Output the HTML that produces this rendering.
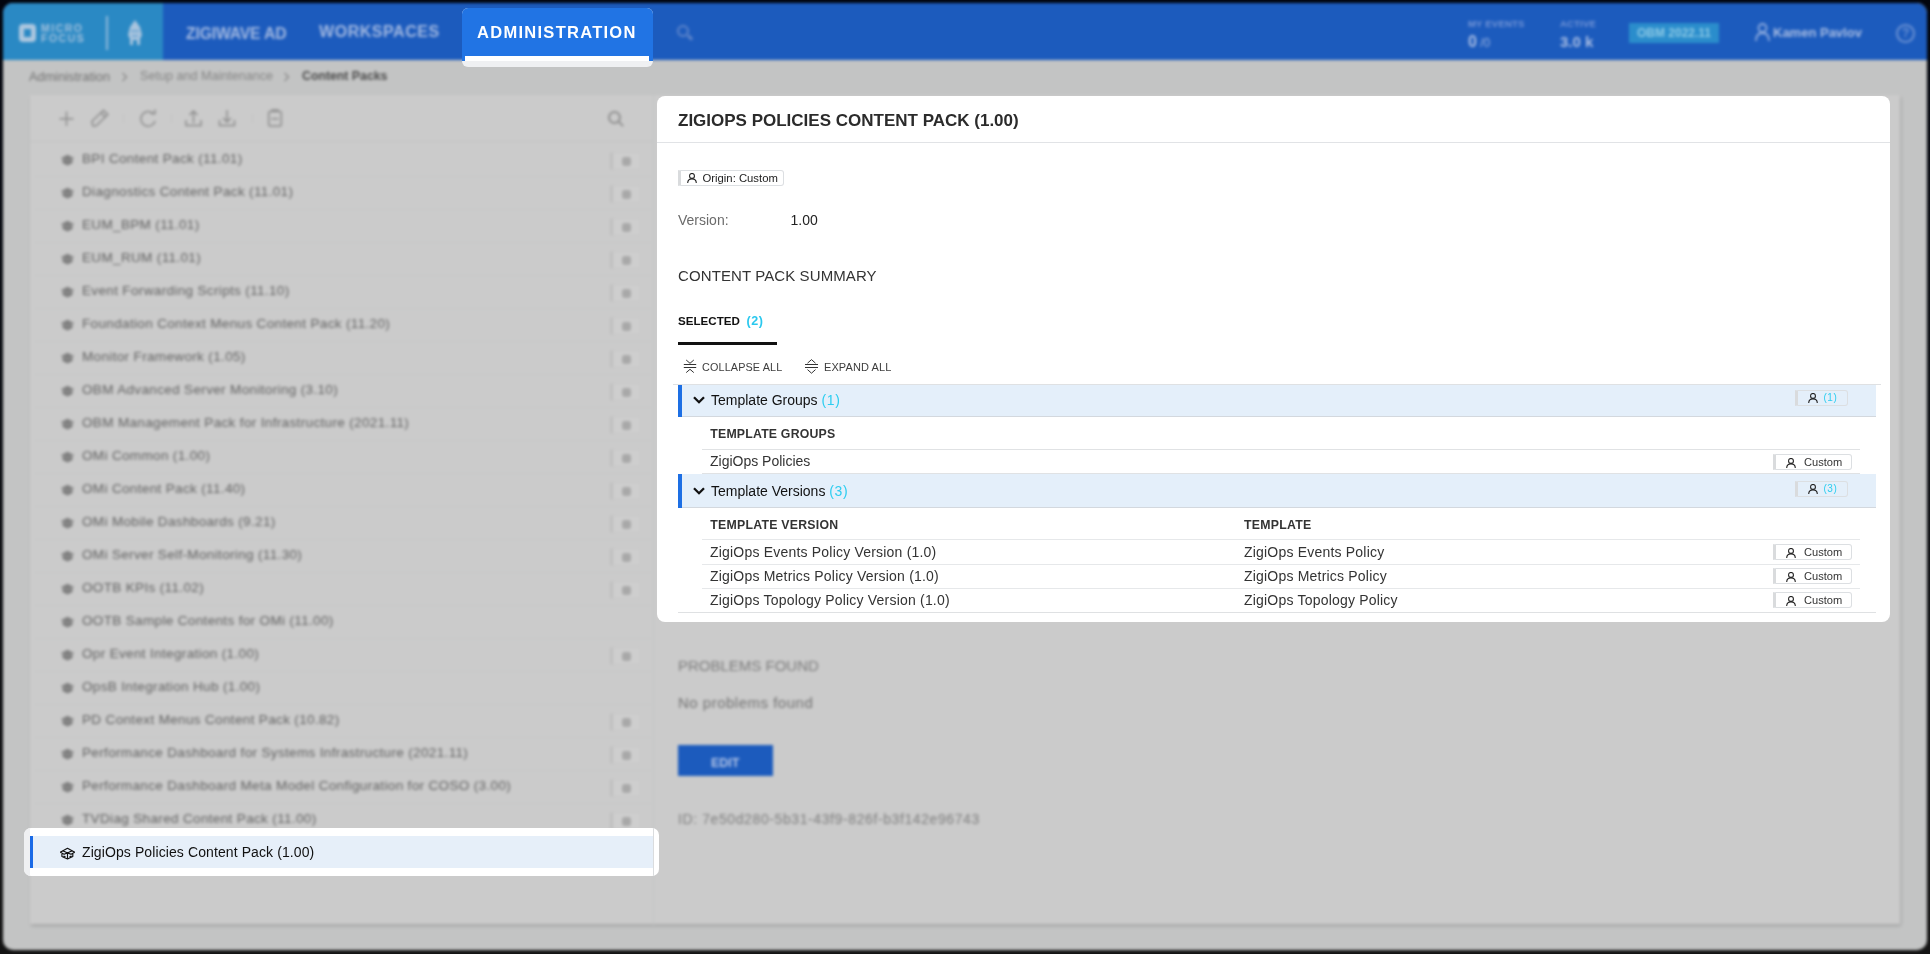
<!DOCTYPE html>
<html><head><meta charset="utf-8">
<style>
*{box-sizing:border-box;margin:0;padding:0}
html,body{width:1930px;height:954px;overflow:hidden;background:linear-gradient(#02050e,#0a0d12 40%,#141414);font-family:"Liberation Sans",sans-serif}
#bg{position:absolute;left:0;top:0;width:1930px;height:954px;filter:blur(1.4px);overflow:hidden}
.a{position:absolute;white-space:nowrap}
#win{position:absolute;left:3px;top:3px;width:1924px;height:947px;border-radius:10px;overflow:hidden;background:#c3c4c4}
.navt{position:absolute;color:#a3b9e1;font-weight:bold;font-size:16px;letter-spacing:1.5px;top:22px;white-space:nowrap}
.rt{font-size:13.5px;line-height:1;color:#626262;letter-spacing:0.35px}
.ric{width:14px;height:11px;border-radius:5px 5px 6px 6px;background:#8c8c8c}
.rbd{width:31px;height:18px;border:1px solid #c7c7c7;border-left:3px solid #bfbfbf;background:#cecece;border-radius:0 2px 2px 0}
.rbd:after{content:"";position:absolute;left:9px;top:4px;width:9px;height:9px;background:#a8a8a8;border-radius:3px}
#card{position:absolute;left:657px;top:96px;width:1233px;height:526px;background:#fff;border-radius:8px;overflow:hidden;will-change:transform}
#card .a{line-height:1}
</style></head><body>
<div id="bg">
 <div id="win"></div>
 <div class="a" style="left:3px;top:3px;width:1924px;height:57px;background:#1c5bbd;border-radius:10px 10px 0 0"></div>
 <div class="a" style="left:3px;top:3px;width:160px;height:57px;background:#2a89c4;border-radius:10px 0 0 0"></div>
 <div class="a" style="left:19px;top:24px;width:17px;height:18px;border:5px solid #adc7df;border-radius:4px"></div>
 <div class="a" style="left:41px;top:23px;font-size:10.5px;font-weight:bold;color:#a3c1dd;line-height:10px;letter-spacing:1.5px">MICRO<br>FOCUS</div>
 <div class="a" style="left:106px;top:16px;width:2px;height:34px;background:#8fb8da"></div>
 <svg class="a" style="left:126px;top:19px" width="18" height="27" viewBox="0 0 18 27"><path d="M9 1 L4 8 L2 16 L4 20 V26 H7 V21 H11 V26 H14 V20 L16 16 L14 8 Z" fill="#a9c4de"/><path d="M5 12 H13 M6 17 H12" stroke="#5e9fd0" stroke-width="1.5"/></svg>
 <div class="navt" style="left:186px;top:24.5px;font-size:15.8px;letter-spacing:-0.2px">ZIGIWAVE AD</div>
 <div class="navt" style="left:319px;top:23px;font-size:16px;letter-spacing:0.55px">WORKSPACES</div>
 <div class="a" style="left:677px;top:25px;width:12px;height:12px;border:2.5px solid #5f86cb;border-radius:50%"></div>
 <div class="a" style="left:687px;top:36px;width:6px;height:3px;background:#5f86cb;transform:rotate(45deg)"></div>
 <div class="a" style="left:1468px;top:18px;font-size:9.5px;font-weight:bold;color:#7697d8;letter-spacing:0.2px">MY EVENTS</div>
 <div class="a" style="left:1468px;top:33px;font-size:16px;font-weight:bold;color:#a9bde3">0<span style="font-size:12px;font-weight:normal;color:#9ab3e1"> /0</span></div>
 <div class="a" style="left:1560px;top:18px;font-size:9.5px;font-weight:bold;color:#7697d8;letter-spacing:0.2px">ACTIVE</div>
 <div class="a" style="left:1560px;top:33px;font-size:15px;font-weight:bold;color:#a9bde3">3.0 k</div>
 <div class="a" style="left:1629px;top:23px;width:90px;height:20px;background:#2a8dcc"></div>
 <div class="a" style="left:1637px;top:26px;font-size:12px;font-weight:bold;color:#8fcbe6">OBM 2022.11</div>
 <div class="a" style="left:1755px;top:23px;width:15px;height:18px"><svg width="15" height="18" viewBox="0 0 15 18"><circle cx="7.5" cy="5" r="4" fill="none" stroke="#8eacdf" stroke-width="1.8"/><path d="M1 18 C1 12 4 10 7.5 10 C11 10 14 12 14 18" fill="none" stroke="#8eacdf" stroke-width="1.8"/></svg></div>
 <div class="a" style="left:1773px;top:25px;font-size:13px;font-weight:bold;color:#a9bde3">Kamen Pavlov</div>
 <div class="a" style="left:1896px;top:24px;width:19px;height:19px;border:2px solid #6c92d3;border-radius:50%"></div><div class="a" style="left:1902px;top:26px;font-size:12px;font-weight:bold;color:#6c92d3">?</div>
 <div class="a" style="left:29px;top:69px;font-size:12.8px;color:#727272">Administration</div>
 <svg class="a" style="left:121px;top:72px" width="7" height="10" viewBox="0 0 7 10"><path d="M1.5 1 L5.5 5 L1.5 9" fill="none" stroke="#8a8a8a" stroke-width="1.3"/></svg>
 <div class="a" style="left:140px;top:69px;font-size:12.6px;color:#858585">Setup and Maintenance</div>
 <svg class="a" style="left:283px;top:72px" width="7" height="10" viewBox="0 0 7 10"><path d="M1.5 1 L5.5 5 L1.5 9" fill="none" stroke="#8a8a8a" stroke-width="1.3"/></svg>
 <div class="a" style="left:302px;top:69px;font-size:12.3px;font-weight:bold;color:#4a4a4a">Content Packs</div>
 <div class="a" style="left:30px;top:95px;width:1870px;height:829px;background:#cbcbcb;box-shadow:1px 2px 3px rgba(0,0,0,0.16)"></div>
 <div class="a" style="left:30px;top:141px;width:624px;height:1px;background:#c3c4c4"></div>
 <svg class="a" style="left:50px;top:100px" width="240" height="35" viewBox="50 100 240 35"><g fill="none" stroke="#8c8c8c" stroke-width="1.5">
 <path d="M66.5 111.5V126M59.5 118.7H73.5"/>
 <path d="M93 126 L91.8 121.5 L103.5 110.3 L107.8 114.6 L96.2 125.8 Z M101 112.8 L105.3 117.1"/>
 <path d="M153.8 114.2 A7.3 7.3 0 1 0 155.2 121" /><path d="M150.5 113.6 L155 113.6 L155 109.6" />
 <path d="M186 120V125.6H201V120M193.5 123V111M189.5 115 L193.5 111 L197.5 115"/>
 <path d="M219.5 120V125.6H234.5V120M227 110V122M223 118 L227 122 L231 118"/>
 <rect x="268.7" y="111.5" width="12.6" height="14.6" rx="1.5"/><path d="M272 111.5V110H278V111.5M271.5 118.7H278.5"/>
 </g><g stroke="#c3c3c3" stroke-width="1"><path d="M123.5 114V123.5M171.5 114V123.5M252.5 114V123.5"/></g></svg>
 <div class="a" style="left:608px;top:111px;width:13px;height:13px;border:2px solid #8f8f8f;border-radius:50%"></div>
 <div class="a" style="left:618px;top:123px;width:6px;height:2px;background:#8f8f8f;transform:rotate(45deg)"></div>
<div class="a" style="left:34px;top:176px;width:618px;height:1px;background:#c6c7c7"></div>
<svg class="a" style="left:60px;top:154px" width="15" height="12" viewBox="0 0 15 12"><path d="M1 4 L7.5 0.8 L14 4 L12.5 5 V9 L7.5 11.5 L2.5 9 V5 Z" fill="#7e7e7e"/><path d="M1 4 L7.5 7 L14 4" stroke="#9a9a9a" stroke-width="0.8" fill="none"/></svg>
<div class="a rt" style="left:82px;top:152px">BPI Content Pack (11.01)</div>
<div class="a rbd" style="left:610px;top:152px"></div>
<div class="a" style="left:34px;top:209px;width:618px;height:1px;background:#c6c7c7"></div>
<svg class="a" style="left:60px;top:187px" width="15" height="12" viewBox="0 0 15 12"><path d="M1 4 L7.5 0.8 L14 4 L12.5 5 V9 L7.5 11.5 L2.5 9 V5 Z" fill="#7e7e7e"/><path d="M1 4 L7.5 7 L14 4" stroke="#9a9a9a" stroke-width="0.8" fill="none"/></svg>
<div class="a rt" style="left:82px;top:185px">Diagnostics Content Pack (11.01)</div>
<div class="a rbd" style="left:610px;top:185px"></div>
<div class="a" style="left:34px;top:242px;width:618px;height:1px;background:#c6c7c7"></div>
<svg class="a" style="left:60px;top:220px" width="15" height="12" viewBox="0 0 15 12"><path d="M1 4 L7.5 0.8 L14 4 L12.5 5 V9 L7.5 11.5 L2.5 9 V5 Z" fill="#7e7e7e"/><path d="M1 4 L7.5 7 L14 4" stroke="#9a9a9a" stroke-width="0.8" fill="none"/></svg>
<div class="a rt" style="left:82px;top:218px">EUM_BPM (11.01)</div>
<div class="a rbd" style="left:610px;top:218px"></div>
<div class="a" style="left:34px;top:275px;width:618px;height:1px;background:#c6c7c7"></div>
<svg class="a" style="left:60px;top:253px" width="15" height="12" viewBox="0 0 15 12"><path d="M1 4 L7.5 0.8 L14 4 L12.5 5 V9 L7.5 11.5 L2.5 9 V5 Z" fill="#7e7e7e"/><path d="M1 4 L7.5 7 L14 4" stroke="#9a9a9a" stroke-width="0.8" fill="none"/></svg>
<div class="a rt" style="left:82px;top:251px">EUM_RUM (11.01)</div>
<div class="a rbd" style="left:610px;top:251px"></div>
<div class="a" style="left:34px;top:308px;width:618px;height:1px;background:#c6c7c7"></div>
<svg class="a" style="left:60px;top:286px" width="15" height="12" viewBox="0 0 15 12"><path d="M1 4 L7.5 0.8 L14 4 L12.5 5 V9 L7.5 11.5 L2.5 9 V5 Z" fill="#7e7e7e"/><path d="M1 4 L7.5 7 L14 4" stroke="#9a9a9a" stroke-width="0.8" fill="none"/></svg>
<div class="a rt" style="left:82px;top:284px">Event Forwarding Scripts (11.10)</div>
<div class="a rbd" style="left:610px;top:284px"></div>
<div class="a" style="left:34px;top:341px;width:618px;height:1px;background:#c6c7c7"></div>
<svg class="a" style="left:60px;top:319px" width="15" height="12" viewBox="0 0 15 12"><path d="M1 4 L7.5 0.8 L14 4 L12.5 5 V9 L7.5 11.5 L2.5 9 V5 Z" fill="#7e7e7e"/><path d="M1 4 L7.5 7 L14 4" stroke="#9a9a9a" stroke-width="0.8" fill="none"/></svg>
<div class="a rt" style="left:82px;top:317px">Foundation Context Menus Content Pack (11.20)</div>
<div class="a rbd" style="left:610px;top:317px"></div>
<div class="a" style="left:34px;top:374px;width:618px;height:1px;background:#c6c7c7"></div>
<svg class="a" style="left:60px;top:352px" width="15" height="12" viewBox="0 0 15 12"><path d="M1 4 L7.5 0.8 L14 4 L12.5 5 V9 L7.5 11.5 L2.5 9 V5 Z" fill="#7e7e7e"/><path d="M1 4 L7.5 7 L14 4" stroke="#9a9a9a" stroke-width="0.8" fill="none"/></svg>
<div class="a rt" style="left:82px;top:350px">Monitor Framework (1.05)</div>
<div class="a rbd" style="left:610px;top:350px"></div>
<div class="a" style="left:34px;top:407px;width:618px;height:1px;background:#c6c7c7"></div>
<svg class="a" style="left:60px;top:385px" width="15" height="12" viewBox="0 0 15 12"><path d="M1 4 L7.5 0.8 L14 4 L12.5 5 V9 L7.5 11.5 L2.5 9 V5 Z" fill="#7e7e7e"/><path d="M1 4 L7.5 7 L14 4" stroke="#9a9a9a" stroke-width="0.8" fill="none"/></svg>
<div class="a rt" style="left:82px;top:383px">OBM Advanced Server Monitoring (3.10)</div>
<div class="a rbd" style="left:610px;top:383px"></div>
<div class="a" style="left:34px;top:440px;width:618px;height:1px;background:#c6c7c7"></div>
<svg class="a" style="left:60px;top:418px" width="15" height="12" viewBox="0 0 15 12"><path d="M1 4 L7.5 0.8 L14 4 L12.5 5 V9 L7.5 11.5 L2.5 9 V5 Z" fill="#7e7e7e"/><path d="M1 4 L7.5 7 L14 4" stroke="#9a9a9a" stroke-width="0.8" fill="none"/></svg>
<div class="a rt" style="left:82px;top:416px">OBM Management Pack for Infrastructure (2021.11)</div>
<div class="a rbd" style="left:610px;top:416px"></div>
<div class="a" style="left:34px;top:473px;width:618px;height:1px;background:#c6c7c7"></div>
<svg class="a" style="left:60px;top:451px" width="15" height="12" viewBox="0 0 15 12"><path d="M1 4 L7.5 0.8 L14 4 L12.5 5 V9 L7.5 11.5 L2.5 9 V5 Z" fill="#7e7e7e"/><path d="M1 4 L7.5 7 L14 4" stroke="#9a9a9a" stroke-width="0.8" fill="none"/></svg>
<div class="a rt" style="left:82px;top:449px">OMi Common (1.00)</div>
<div class="a rbd" style="left:610px;top:449px"></div>
<div class="a" style="left:34px;top:506px;width:618px;height:1px;background:#c6c7c7"></div>
<svg class="a" style="left:60px;top:484px" width="15" height="12" viewBox="0 0 15 12"><path d="M1 4 L7.5 0.8 L14 4 L12.5 5 V9 L7.5 11.5 L2.5 9 V5 Z" fill="#7e7e7e"/><path d="M1 4 L7.5 7 L14 4" stroke="#9a9a9a" stroke-width="0.8" fill="none"/></svg>
<div class="a rt" style="left:82px;top:482px">OMi Content Pack (11.40)</div>
<div class="a rbd" style="left:610px;top:482px"></div>
<div class="a" style="left:34px;top:539px;width:618px;height:1px;background:#c6c7c7"></div>
<svg class="a" style="left:60px;top:517px" width="15" height="12" viewBox="0 0 15 12"><path d="M1 4 L7.5 0.8 L14 4 L12.5 5 V9 L7.5 11.5 L2.5 9 V5 Z" fill="#7e7e7e"/><path d="M1 4 L7.5 7 L14 4" stroke="#9a9a9a" stroke-width="0.8" fill="none"/></svg>
<div class="a rt" style="left:82px;top:515px">OMi Mobile Dashboards (9.21)</div>
<div class="a rbd" style="left:610px;top:515px"></div>
<div class="a" style="left:34px;top:572px;width:618px;height:1px;background:#c6c7c7"></div>
<svg class="a" style="left:60px;top:550px" width="15" height="12" viewBox="0 0 15 12"><path d="M1 4 L7.5 0.8 L14 4 L12.5 5 V9 L7.5 11.5 L2.5 9 V5 Z" fill="#7e7e7e"/><path d="M1 4 L7.5 7 L14 4" stroke="#9a9a9a" stroke-width="0.8" fill="none"/></svg>
<div class="a rt" style="left:82px;top:548px">OMi Server Self-Monitoring (11.30)</div>
<div class="a rbd" style="left:610px;top:548px"></div>
<div class="a" style="left:34px;top:605px;width:618px;height:1px;background:#c6c7c7"></div>
<svg class="a" style="left:60px;top:583px" width="15" height="12" viewBox="0 0 15 12"><path d="M1 4 L7.5 0.8 L14 4 L12.5 5 V9 L7.5 11.5 L2.5 9 V5 Z" fill="#7e7e7e"/><path d="M1 4 L7.5 7 L14 4" stroke="#9a9a9a" stroke-width="0.8" fill="none"/></svg>
<div class="a rt" style="left:82px;top:581px">OOTB KPIs (11.02)</div>
<div class="a rbd" style="left:610px;top:581px"></div>
<div class="a" style="left:34px;top:638px;width:618px;height:1px;background:#c6c7c7"></div>
<svg class="a" style="left:60px;top:616px" width="15" height="12" viewBox="0 0 15 12"><path d="M1 4 L7.5 0.8 L14 4 L12.5 5 V9 L7.5 11.5 L2.5 9 V5 Z" fill="#7e7e7e"/><path d="M1 4 L7.5 7 L14 4" stroke="#9a9a9a" stroke-width="0.8" fill="none"/></svg>
<div class="a rt" style="left:82px;top:614px">OOTB Sample Contents for OMi (11.00)</div>
<div class="a" style="left:34px;top:671px;width:618px;height:1px;background:#c6c7c7"></div>
<svg class="a" style="left:60px;top:649px" width="15" height="12" viewBox="0 0 15 12"><path d="M1 4 L7.5 0.8 L14 4 L12.5 5 V9 L7.5 11.5 L2.5 9 V5 Z" fill="#7e7e7e"/><path d="M1 4 L7.5 7 L14 4" stroke="#9a9a9a" stroke-width="0.8" fill="none"/></svg>
<div class="a rt" style="left:82px;top:647px">Opr Event Integration (1.00)</div>
<div class="a rbd" style="left:610px;top:647px"></div>
<div class="a" style="left:34px;top:704px;width:618px;height:1px;background:#c6c7c7"></div>
<svg class="a" style="left:60px;top:682px" width="15" height="12" viewBox="0 0 15 12"><path d="M1 4 L7.5 0.8 L14 4 L12.5 5 V9 L7.5 11.5 L2.5 9 V5 Z" fill="#7e7e7e"/><path d="M1 4 L7.5 7 L14 4" stroke="#9a9a9a" stroke-width="0.8" fill="none"/></svg>
<div class="a rt" style="left:82px;top:680px">OpsB Integration Hub (1.00)</div>
<div class="a" style="left:34px;top:737px;width:618px;height:1px;background:#c6c7c7"></div>
<svg class="a" style="left:60px;top:715px" width="15" height="12" viewBox="0 0 15 12"><path d="M1 4 L7.5 0.8 L14 4 L12.5 5 V9 L7.5 11.5 L2.5 9 V5 Z" fill="#7e7e7e"/><path d="M1 4 L7.5 7 L14 4" stroke="#9a9a9a" stroke-width="0.8" fill="none"/></svg>
<div class="a rt" style="left:82px;top:713px">PD Context Menus Content Pack (10.82)</div>
<div class="a rbd" style="left:610px;top:713px"></div>
<div class="a" style="left:34px;top:770px;width:618px;height:1px;background:#c6c7c7"></div>
<svg class="a" style="left:60px;top:748px" width="15" height="12" viewBox="0 0 15 12"><path d="M1 4 L7.5 0.8 L14 4 L12.5 5 V9 L7.5 11.5 L2.5 9 V5 Z" fill="#7e7e7e"/><path d="M1 4 L7.5 7 L14 4" stroke="#9a9a9a" stroke-width="0.8" fill="none"/></svg>
<div class="a rt" style="left:82px;top:746px">Performance Dashboard for Systems Infrastructure (2021.11)</div>
<div class="a rbd" style="left:610px;top:746px"></div>
<div class="a" style="left:34px;top:803px;width:618px;height:1px;background:#c6c7c7"></div>
<svg class="a" style="left:60px;top:781px" width="15" height="12" viewBox="0 0 15 12"><path d="M1 4 L7.5 0.8 L14 4 L12.5 5 V9 L7.5 11.5 L2.5 9 V5 Z" fill="#7e7e7e"/><path d="M1 4 L7.5 7 L14 4" stroke="#9a9a9a" stroke-width="0.8" fill="none"/></svg>
<div class="a rt" style="left:82px;top:779px">Performance Dashboard Meta Model Configuration for COSO (3.00)</div>
<div class="a rbd" style="left:610px;top:779px"></div>
<div class="a" style="left:34px;top:836px;width:618px;height:1px;background:#c6c7c7"></div>
<svg class="a" style="left:60px;top:814px" width="15" height="12" viewBox="0 0 15 12"><path d="M1 4 L7.5 0.8 L14 4 L12.5 5 V9 L7.5 11.5 L2.5 9 V5 Z" fill="#7e7e7e"/><path d="M1 4 L7.5 7 L14 4" stroke="#9a9a9a" stroke-width="0.8" fill="none"/></svg>
<div class="a rt" style="left:82px;top:812px">TVDiag Shared Content Pack (11.00)</div>
<div class="a rbd" style="left:610px;top:812px"></div>
<div class="a" style="left:34px;top:869px;width:618px;height:1px;background:#c6c7c7"></div>
<svg class="a" style="left:60px;top:847px" width="15" height="12" viewBox="0 0 15 12"><path d="M1 4 L7.5 0.8 L14 4 L12.5 5 V9 L7.5 11.5 L2.5 9 V5 Z" fill="#7e7e7e"/><path d="M1 4 L7.5 7 L14 4" stroke="#9a9a9a" stroke-width="0.8" fill="none"/></svg>
<div class="a rt" style="left:82px;top:845px">ZigiOps Policies Content Pack (1.00)</div>
 <div class="a" style="left:653px;top:95px;width:1px;height:830px;background:#c4c5c5"></div>
 <div class="a" style="left:678px;top:658px;font-size:15px;line-height:1;color:#7c7c7c;letter-spacing:0px">PROBLEMS FOUND</div>
 <div class="a" style="left:678px;top:695px;font-size:15px;line-height:1;color:#727272;letter-spacing:0.5px">No problems found</div>
 <div class="a" style="left:678px;top:745px;width:95px;height:31px;background:#1c5bbd"></div>
 <div class="a" style="left:711px;top:756.5px;font-size:12.5px;line-height:1;font-weight:bold;color:#b3c4e6">EDIT</div>
 <div class="a" style="left:678px;top:812px;font-size:14px;line-height:1;color:#7e7e7e;letter-spacing:0.6px">ID: 7e50d280-5b31-43f9-826f-b3f142e96743</div>
</div>
<!-- highlighted tab -->
<div class="a" style="left:462px;top:8px;width:191px;height:59px;border-radius:6px;overflow:hidden;background:#eff0f2;will-change:transform">
 <div class="a" style="left:0;top:0;width:191px;height:53px;background:#2174e4"></div>
 <div class="a" style="left:3px;top:48px;width:184px;height:5px;background:#fff"></div>
 <div class="a" style="left:15px;top:15.5px;font-size:16.5px;line-height:1;font-weight:bold;color:#fff;letter-spacing:1.28px">ADMINISTRATION</div>
</div>
<!-- selected item -->
<div class="a" style="left:24px;top:828px;width:635px;height:48px;border-radius:7px;overflow:hidden;background:#fff;will-change:transform">
 <div class="a" style="left:0;top:0;width:6px;height:48px;background:#eff0f2"></div>
 <div class="a" style="left:6px;top:8px;width:623px;height:32px;background:#e6eff9"></div>
 <div class="a" style="left:6px;top:8px;width:3px;height:32px;background:#1a6ae6"></div>
 <div class="a" style="left:629px;top:0;width:1px;height:48px;background:#dadcde"></div>
 <svg class="a" style="left:35px;top:18px" width="18" height="15" viewBox="0 0 18 15"><path d="M1.2 6.3 L8.5 2.3 L15.8 6.3 M3.4 4.5 L8.5 6.9 L13.4 4.5 M1.2 6.3 L5.1 8.3 L8.5 6.9 L12 8.3 L15.8 6.3 M2.9 8 V10.5 L8.5 13 L13.8 10.5 V8 M8.5 6.9 V13 M4.5 10 L6.5 10.8 M10.5 10.8 L12.5 10" fill="none" stroke="#111" stroke-width="1.15" stroke-linejoin="round"/></svg>
 <div class="a" style="left:58px;top:17px;font-size:14px;line-height:1;color:#111;letter-spacing:0.1px">ZigiOps Policies Content Pack (1.00)</div>
</div>
<div id="card">
<div class="a" style="left:21.0px;top:16.0px;font-size:17px;line-height:1;font-weight:bold;color:#2b2b2b">ZIGIOPS POLICIES CONTENT PACK (1.00)</div>
<div class="a" style="left:0px;top:46px;width:1233px;height:1px;background:#e1e3e6"></div>
<div class="a" style="left:21px;top:74px;width:106px;height:16px;background:#fff;border:1px solid #dcdfe2;border-left:3px solid #d9dbdd;border-radius:0 3px 3px 0"></div>
<svg class="a" style="left:30px;top:76.5px" width="10" height="10" viewBox="0 0 10 10"><circle cx="5" cy="2.9" r="2.45" fill="none" stroke="#222" stroke-width="1.1"/><path d="M0.7 9.9 C0.8 7 2.7 5.9 5 5.9 C7.3 5.9 9.2 7 9.3 9.9" fill="none" stroke="#222" stroke-width="1.1"/></svg>
<div class="a" style="left:45.5px;top:76.9px;font-size:11.3px;line-height:1;color:#222">Origin: Custom</div>
<div class="a" style="left:21.0px;top:117.3px;font-size:14px;line-height:1;color:#6b6b6b">Version:</div>
<div class="a" style="left:133.5px;top:117.3px;font-size:14px;line-height:1;color:#222">1.00</div>
<div class="a" style="left:21.0px;top:171.8px;font-size:15px;line-height:1;color:#333;letter-spacing:0.1px">CONTENT PACK SUMMARY</div>
<div class="a" style="left:21.0px;top:219.1px;font-size:11.6px;line-height:1;font-weight:bold;color:#111">SELECTED</div>
<div class="a" style="left:89.5px;top:218.9px;font-size:12.5px;line-height:1;font-weight:bold;color:#2ac8ee;letter-spacing:0.6px">(2)</div>
<div class="a" style="left:21px;top:246px;width:99px;height:3px;background:#111"></div>
<svg class="a" style="left:26px;top:263px" width="14" height="16" viewBox="0 0 14 16"><path d="M0.8 5.5H13.2M0.8 8.5H13.2" stroke="#333" stroke-width="1"/><path d="M3.2 1 L7 4.3 L10.8 1M3.2 13.6 L7 10.3 L10.8 13.6" fill="none" stroke="#333" stroke-width="1"/></svg>
<div class="a" style="left:45.0px;top:265.7px;font-size:10.8px;line-height:1;color:#3d3d3d;letter-spacing:0.15px">COLLAPSE ALL</div>
<svg class="a" style="left:147px;top:262px" width="15" height="17" viewBox="0 0 15 17"><path d="M1 6.5H14M1 9.5H14" stroke="#333" stroke-width="1"/><path d="M3.5 5.2 L7.5 1.6 L11.5 5.2M3.5 11.6 L7.5 15.2 L11.5 11.6" fill="none" stroke="#333" stroke-width="1"/></svg>
<div class="a" style="left:167.0px;top:265.5px;font-size:11px;line-height:1;color:#3d3d3d;letter-spacing:0.1px">EXPAND ALL</div>
<div class="a" style="left:16px;top:288px;width:1208px;height:1px;background:#dfe1e3"></div>
<div class="a" style="left:21px;top:289px;width:1198px;height:32px;background:#e4effa;border-bottom:1px solid #d3d8de"></div>
<div class="a" style="left:21px;top:289px;width:4px;height:32px;background:#1d6fe4"></div>
<svg class="a" style="left:35px;top:299.2px" width="14" height="10" viewBox="0 0 14 10"><path d="M2 2.2 L7 7.2 L12 2.2" fill="none" stroke="#111" stroke-width="2.3"/></svg>
<div class="a" style="left:54.0px;top:296.8px;font-size:14px;line-height:1;color:#111">Template Groups <span style="color:#2ccdf0;letter-spacing:0.6px">(1)</span></div>
<div class="a" style="left:1138px;top:294px;width:53px;height:16px;background:#e4effa;border:1px solid #dcdfe2;border-left:3px solid #d9dbdd;border-radius:0 3px 3px 0"></div>
<svg class="a" style="left:1151px;top:297px" width="10" height="10" viewBox="0 0 10 10"><circle cx="5" cy="2.9" r="2.45" fill="none" stroke="#222" stroke-width="1.1"/><path d="M0.7 9.9 C0.8 7 2.7 5.9 5 5.9 C7.3 5.9 9.2 7 9.3 9.9" fill="none" stroke="#222" stroke-width="1.1"/></svg>
<div class="a" style="left:1166.5px;top:297.4px;font-size:10px;line-height:1;color:#2ccdf0;letter-spacing:0.5px">(1)</div>
<div class="a" style="left:53.3px;top:331.6px;font-size:12.3px;line-height:1;font-weight:bold;color:#333;letter-spacing:0.2px">TEMPLATE GROUPS</div>
<div class="a" style="left:45px;top:353px;width:1158px;height:1px;background:#e0e2e4"></div>
<div class="a" style="left:53.0px;top:358.1px;font-size:14px;line-height:1;color:#333">ZigiOps Policies</div>
<div class="a" style="left:1116px;top:358px;width:79px;height:16px;background:#fff;border:1px solid #dcdfe2;border-left:3px solid #d9dbdd;border-radius:0 3px 3px 0"></div>
<svg class="a" style="left:1129px;top:361.5px" width="10" height="10" viewBox="0 0 10 10"><circle cx="5" cy="2.9" r="2.45" fill="none" stroke="#222" stroke-width="1.1"/><path d="M0.7 9.9 C0.8 7 2.7 5.9 5 5.9 C7.3 5.9 9.2 7 9.3 9.9" fill="none" stroke="#222" stroke-width="1.1"/></svg>
<div class="a" style="left:1147.0px;top:360.8px;font-size:11.1px;line-height:1;color:#333">Custom</div>
<div class="a" style="left:45px;top:377px;width:1158px;height:1px;background:#e0e2e4"></div>
<div class="a" style="left:21px;top:378px;width:1198px;height:34px;background:#e4effa;border-bottom:1px solid #d3d8de"></div>
<div class="a" style="left:21px;top:378px;width:4px;height:34px;background:#1d6fe4"></div>
<svg class="a" style="left:35px;top:390.1px" width="14" height="10" viewBox="0 0 14 10"><path d="M2 2.2 L7 7.2 L12 2.2" fill="none" stroke="#111" stroke-width="2.3"/></svg>
<div class="a" style="left:54.0px;top:387.8px;font-size:14px;line-height:1;color:#111">Template Versions <span style="color:#2ccdf0;letter-spacing:0.6px">(3)</span></div>
<div class="a" style="left:1138px;top:385px;width:53px;height:16px;background:#e4effa;border:1px solid #dcdfe2;border-left:3px solid #d9dbdd;border-radius:0 3px 3px 0"></div>
<svg class="a" style="left:1151px;top:388px" width="10" height="10" viewBox="0 0 10 10"><circle cx="5" cy="2.9" r="2.45" fill="none" stroke="#222" stroke-width="1.1"/><path d="M0.7 9.9 C0.8 7 2.7 5.9 5 5.9 C7.3 5.9 9.2 7 9.3 9.9" fill="none" stroke="#222" stroke-width="1.1"/></svg>
<div class="a" style="left:1166.5px;top:388.4px;font-size:10px;line-height:1;color:#2ccdf0;letter-spacing:0.5px">(3)</div>
<div class="a" style="left:53.3px;top:422.5px;font-size:12.3px;line-height:1;font-weight:bold;color:#333;letter-spacing:0.25px">TEMPLATE VERSION</div>
<div class="a" style="left:587.0px;top:422.5px;font-size:12.3px;line-height:1;font-weight:bold;color:#333;letter-spacing:0.25px">TEMPLATE</div>
<div class="a" style="left:45px;top:443px;width:1158px;height:1px;background:#e6e8ea"></div>
<div class="a" style="left:53.0px;top:449.1px;font-size:14px;line-height:1;color:#333;letter-spacing:0.2px">ZigiOps Events Policy Version (1.0)</div>
<div class="a" style="left:587.0px;top:449.1px;font-size:14px;line-height:1;color:#333;letter-spacing:0.2px">ZigiOps Events Policy</div>
<div class="a" style="left:1116px;top:448px;width:79px;height:16px;background:#fff;border:1px solid #dcdfe2;border-left:3px solid #d9dbdd;border-radius:0 3px 3px 0"></div>
<svg class="a" style="left:1129px;top:451.5px" width="10" height="10" viewBox="0 0 10 10"><circle cx="5" cy="2.9" r="2.45" fill="none" stroke="#222" stroke-width="1.1"/><path d="M0.7 9.9 C0.8 7 2.7 5.9 5 5.9 C7.3 5.9 9.2 7 9.3 9.9" fill="none" stroke="#222" stroke-width="1.1"/></svg>
<div class="a" style="left:1147.0px;top:450.8px;font-size:11.1px;line-height:1;color:#333">Custom</div>
<div class="a" style="left:45px;top:468px;width:1158px;height:1px;background:#e6e8ea"></div>
<div class="a" style="left:53.0px;top:473.0px;font-size:14px;line-height:1;color:#333;letter-spacing:0.2px">ZigiOps Metrics Policy Version (1.0)</div>
<div class="a" style="left:587.0px;top:473.0px;font-size:14px;line-height:1;color:#333;letter-spacing:0.2px">ZigiOps Metrics Policy</div>
<div class="a" style="left:1116px;top:472px;width:79px;height:16px;background:#fff;border:1px solid #dcdfe2;border-left:3px solid #d9dbdd;border-radius:0 3px 3px 0"></div>
<svg class="a" style="left:1129px;top:475.5px" width="10" height="10" viewBox="0 0 10 10"><circle cx="5" cy="2.9" r="2.45" fill="none" stroke="#222" stroke-width="1.1"/><path d="M0.7 9.9 C0.8 7 2.7 5.9 5 5.9 C7.3 5.9 9.2 7 9.3 9.9" fill="none" stroke="#222" stroke-width="1.1"/></svg>
<div class="a" style="left:1147.0px;top:474.8px;font-size:11.1px;line-height:1;color:#333">Custom</div>
<div class="a" style="left:45px;top:492px;width:1158px;height:1px;background:#e6e8ea"></div>
<div class="a" style="left:53.0px;top:496.8px;font-size:14px;line-height:1;color:#333;letter-spacing:0.2px">ZigiOps Topology Policy Version (1.0)</div>
<div class="a" style="left:587.0px;top:496.8px;font-size:14px;line-height:1;color:#333;letter-spacing:0.2px">ZigiOps Topology Policy</div>
<div class="a" style="left:1116px;top:496px;width:79px;height:16px;background:#fff;border:1px solid #dcdfe2;border-left:3px solid #d9dbdd;border-radius:0 3px 3px 0"></div>
<svg class="a" style="left:1129px;top:499.5px" width="10" height="10" viewBox="0 0 10 10"><circle cx="5" cy="2.9" r="2.45" fill="none" stroke="#222" stroke-width="1.1"/><path d="M0.7 9.9 C0.8 7 2.7 5.9 5 5.9 C7.3 5.9 9.2 7 9.3 9.9" fill="none" stroke="#222" stroke-width="1.1"/></svg>
<div class="a" style="left:1147.0px;top:498.8px;font-size:11.1px;line-height:1;color:#333">Custom</div>
<div class="a" style="left:21px;top:516px;width:1198px;height:1px;background:#dfe1e3"></div>
</div>
</body></html>
